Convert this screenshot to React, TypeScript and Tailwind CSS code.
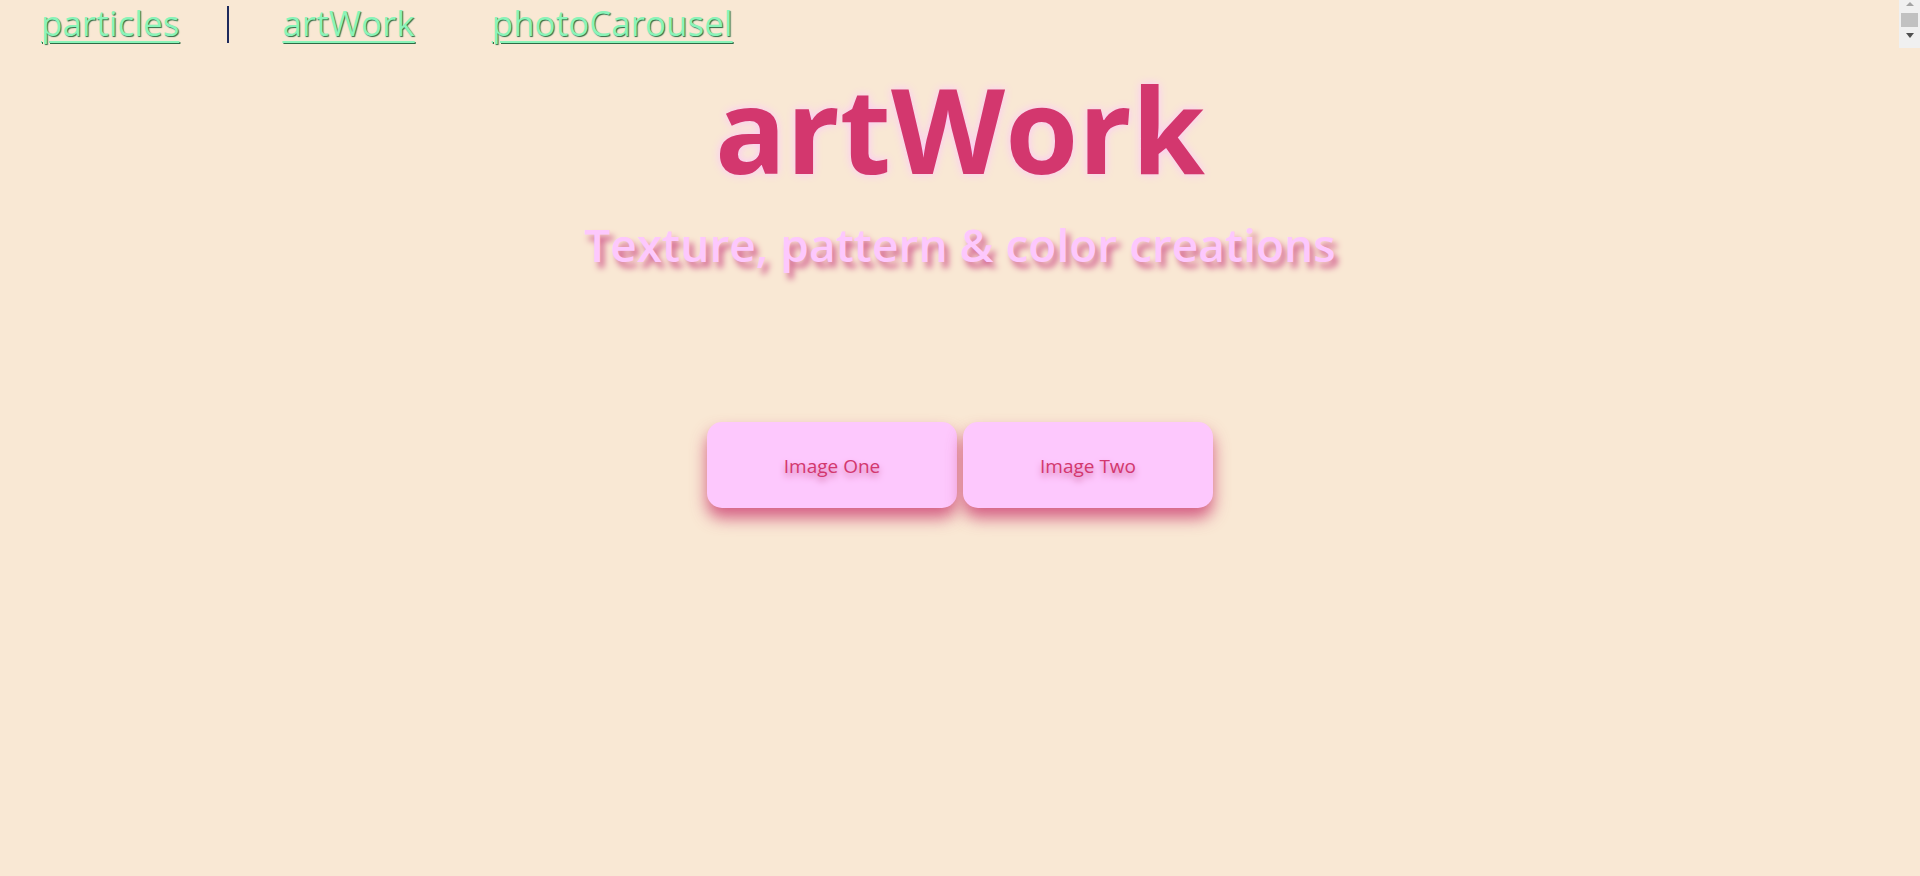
import { useState } from 'react';

const links = ['particles', 'artWork', 'photoCarousel'];

export default function App() {
	const [active, setActive] = useState('artWork');

	return (
		<div className="min-h-screen bg-[#f9e8d4] font-['Open_Sans','Noto_Sans',sans-serif]">
			<nav className="flex h-12">
				<div className="flex flex-1 items-start pl-[41px] pt-[5px]">
					<a
						href="#"
						onClick={() => setActive(links[0])}
						className="text-[35px] leading-none text-[#8af4b9] underline decoration-2 underline-offset-[5px] [text-shadow:1px_1px_1px_#2e6b45]"
					>
						particles
					</a>
					<span className="ml-[48px] mt-[1px] h-[37px] w-[2px] bg-[#1e2a5c]" />
					<a
						href="#"
						onClick={() => setActive(links[1])}
						className="ml-[53px] text-[35px] leading-none text-[#8af4b9] underline decoration-2 underline-offset-[5px] [text-shadow:1px_1px_1px_#2e6b45]"
					>
						artWork
					</a>
					<a
						href="#"
						onClick={() => setActive(links[2])}
						className="ml-[77px] text-[35px] leading-none text-[#8af4b9] underline decoration-2 underline-offset-[5px] [text-shadow:1px_1px_1px_#2e6b45]"
					>
						photoCarousel
					</a>
				</div>

				{/* nav's own scrollbar */}
				<div className="flex h-12 w-[21px] flex-col items-center bg-[#f0f0f0] pt-[2px]">
					<div className="h-0 w-0 border-x-[4.5px] border-b-[4px] border-x-transparent border-b-[#a3a3a3]" />
					<div className="mt-[7px] h-[14px] w-[17px] bg-[#c1c1c1]" />
					<div className="mt-[6px] h-0 w-0 border-x-[4.5px] border-t-[5px] border-x-transparent border-t-[#505050]" />
				</div>
			</nav>

			<main className="flex flex-col items-center">
				<h1 className="mt-[22px] text-[118px] font-bold leading-none text-[#d3376e] [text-shadow:0_0_10px_#fbc6fb]">
					{active === 'artWork' ? 'artWork' : active}
				</h1>
				<h2 className="mt-[33px] text-[46px] font-semibold leading-none text-[#fdc8fd] [text-shadow:4px_6px_6px_#d2608f]">
					Texture, pattern &amp; color creations
				</h2>

				<div className="mt-[155px] flex gap-[6px]">
					<button className="h-[86px] w-[250px] rounded-[15px] bg-[#fdc8fd] pt-[2px] text-[19px] text-[#d3376e] shadow-[0_10px_16px_rgba(200,50,105,0.75)] [text-shadow:0_4px_6px_#d46fa5]">
						Image One
					</button>
					<button className="h-[86px] w-[250px] rounded-[15px] bg-[#fdc8fd] pt-[2px] text-[19px] text-[#d3376e] shadow-[0_10px_16px_rgba(200,50,105,0.75)] [text-shadow:0_4px_6px_#d46fa5]">
						Image Two
					</button>
				</div>
			</main>
		</div>
	);
}
